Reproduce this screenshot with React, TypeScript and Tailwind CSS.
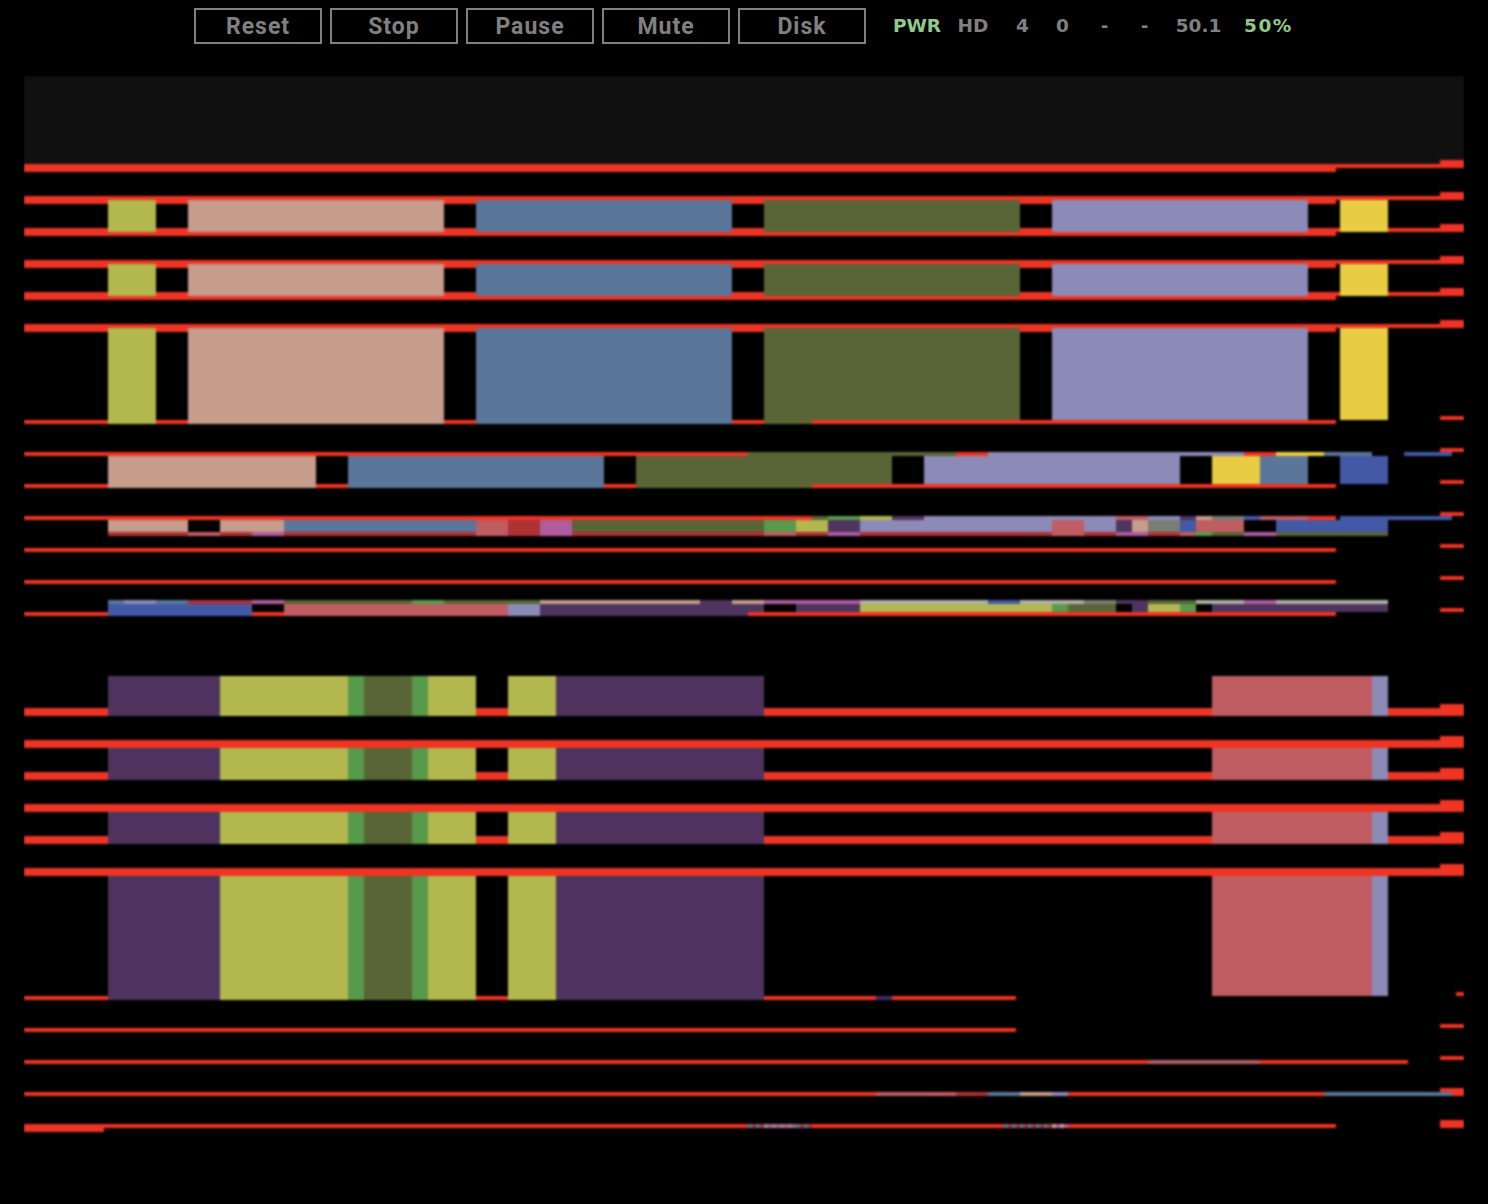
import React from "react";

const RED = "#ef3423";
const YG = "#b3b84e";
const TAN = "#c69c8c";
const BLUE = "#5a7699";
const OLIVE = "#596437";
const LAV = "#8c8bb8";
const YEL = "#e8cd42";
const PUR = "#4e345e";
const GRN = "#589a4c";
const ROSE = "#c05d62";
const DRED = "#ae3134";
const MAG = "#b05c9e";
const ROY = "#4359a6";
const GRY = "#7a7d72";
const LGR = "#b0b0a8";

type Seg = [number, number, string];
type Row = { y: number; b: number; segs: Seg[] };

const buttons = ["Reset", "Stop", "Pause", "Mute", "Disk"];

// bars of the raster, in page coordinates, painted in order
const rows: Row[] = [];
const add = (y: number, b: number, segs: Seg[]) => rows.push({ y, b, segs });

// top group of red bars
[164, 196, 228, 260, 292, 324].forEach((y) => {
  add(y, y + 8, [[24, 1336, RED]]);
  add(y, y + 4, [[1336, 1440, RED]]);
  add(y - 4, y + 4, [[1440, 1464, RED]]);
});

const sixCols = (y: number, b: number) =>
  add(y, b, [
    [108, 156, YG],
    [188, 444, TAN],
    [476, 732, BLUE],
    [764, 1020, OLIVE],
    [1052, 1308, LAV],
    [1340, 1388, YEL],
  ]);

sixCols(200, 232);
sixCols(264, 296);
add(420, 424, [[24, 1336, RED]]);
add(416, 420, [[1440, 1464, RED]]);
sixCols(328, 420);
add(420, 424, [
  [108, 156, YG],
  [188, 444, TAN],
  [476, 732, BLUE],
  [764, 812, OLIVE],
]);

// narrow blocks
add(452, 456, [
  [24, 748, RED],
  [748, 956, OLIVE],
  [956, 988, RED],
  [988, 1244, LAV],
  [1244, 1276, RED],
  [1276, 1324, YEL],
  [1324, 1372, BLUE],
  [1404, 1452, ROY],
]);
add(448, 452, [[1440, 1464, RED]]);
add(484, 488, [[24, 1336, RED]]);
add(480, 484, [[1440, 1464, RED]]);
add(456, 484, [
  [108, 316, TAN],
  [348, 604, BLUE],
  [636, 892, OLIVE],
  [924, 1180, LAV],
  [1212, 1260, YEL],
  [1260, 1308, BLUE],
  [1340, 1388, ROY],
]);
add(484, 488, [
  [108, 316, TAN],
  [348, 604, BLUE],
  [636, 812, OLIVE],
]);

// squeezed rows
add(516, 520, [
  [24, 812, RED],
  [812, 828, OLIVE],
  [828, 860, GRN],
  [860, 892, YG],
  [892, 924, PUR],
  [924, 1116, LAV],
  [1116, 1148, ROSE],
  [1148, 1180, LAV],
  [1180, 1196, PUR],
  [1196, 1212, TAN],
  [1212, 1244, GRY],
  [1244, 1260, ROY],
  [1260, 1308, ROSE],
  [1308, 1336, RED],
  [1340, 1452, ROY],
]);
add(512, 516, [[1440, 1464, RED]]);
add(520, 532, [
  [108, 188, TAN],
  [220, 284, TAN],
  [284, 476, BLUE],
  [476, 508, ROSE],
  [508, 540, DRED],
  [540, 572, MAG],
  [572, 764, OLIVE],
  [764, 796, GRN],
  [796, 828, YG],
  [828, 860, PUR],
  [860, 1052, LAV],
  [1052, 1084, ROSE],
  [1084, 1116, LAV],
  [1116, 1132, PUR],
  [1132, 1148, TAN],
  [1148, 1180, GRY],
  [1180, 1196, ROY],
  [1196, 1244, ROSE],
  [1276, 1388, ROY],
]);
add(532, 536, [
  [108, 188, DRED],
  [188, 220, ROSE],
  [220, 252, DRED],
  [252, 284, MAG],
  [284, 476, DRED],
  [476, 508, ROSE],
  [508, 540, DRED],
  [540, 572, MAG],
  [572, 764, DRED],
  [764, 796, ROSE],
  [796, 828, DRED],
  [828, 860, MAG],
  [860, 1052, DRED],
  [1052, 1084, ROSE],
  [1084, 1116, DRED],
  [1116, 1148, MAG],
  [1148, 1180, DRED],
  [1180, 1196, ROSE],
  [1196, 1212, GRN],
  [1212, 1244, OLIVE],
  [1244, 1276, MAG],
  [1276, 1388, OLIVE],
]);

add(548, 552, [[24, 1336, RED]]);
add(544, 548, [[1440, 1464, RED]]);
add(580, 584, [[24, 1336, RED]]);
add(576, 580, [[1440, 1464, RED]]);

add(612, 616, [
  [24, 108, RED],
  [252, 284, RED],
  [748, 1336, RED],
]);
add(608, 612, [[1440, 1464, RED]]);
add(600, 604, [
  [108, 124, BLUE],
  [124, 156, LAV],
  [156, 188, BLUE],
  [188, 252, DRED],
  [252, 284, MAG],
  [284, 412, OLIVE],
  [412, 444, GRN],
  [444, 540, OLIVE],
  [540, 700, TAN],
  [700, 732, PUR],
  [732, 764, TAN],
  [764, 860, MAG],
  [860, 988, LGR],
  [988, 1020, ROY],
  [1020, 1084, LGR],
  [1084, 1116, GRY],
  [1116, 1148, PUR],
  [1148, 1196, OLIVE],
  [1196, 1244, LGR],
  [1244, 1276, MAG],
  [1276, 1388, LGR],
]);
add(604, 612, [
  [108, 252, ROY],
  [284, 508, ROSE],
  [508, 540, LAV],
  [540, 764, PUR],
  [796, 860, PUR],
  [860, 1052, YG],
  [1052, 1068, GRN],
  [1068, 1116, OLIVE],
  [1132, 1148, PUR],
  [1148, 1180, YG],
  [1180, 1196, GRN],
  [1212, 1388, PUR],
]);
add(612, 616, [
  [108, 252, ROY],
  [284, 508, ROSE],
  [508, 540, LAV],
  [540, 748, PUR],
]);

// lower group
[708, 740, 772, 804, 836, 868].forEach((y) => {
  add(y, y + 8, [[24, 1440, RED]]);
  add(y - 4, y + 8, [[1440, 1464, RED]]);
});

const lowerCols = (y: number, b: number, rb: number) => {
  add(y, b, [
    [108, 220, PUR],
    [220, 348, YG],
    [348, 364, GRN],
    [364, 412, OLIVE],
    [412, 428, GRN],
    [428, 476, YG],
    [508, 556, YG],
    [556, 764, PUR],
  ]);
  add(y, rb, [
    [1212, 1372, ROSE],
    [1372, 1388, LAV],
  ]);
};
lowerCols(676, 716, 716);
lowerCols(748, 780, 780);
lowerCols(812, 844, 844);
lowerCols(876, 1000, 996);

// thin lines at the bottom
add(996, 1000, [
  [24, 108, RED],
  [476, 508, RED],
  [764, 876, RED],
  [876, 892, "#3e2f6a"],
  [892, 1016, RED],
]);
add(992, 996, [[1456, 1464, RED]]);
add(1028, 1032, [[24, 1016, RED]]);
add(1024, 1028, [[1440, 1464, RED]]);
add(1060, 1064, [
  [24, 1148, RED],
  [1148, 1260, "#b06068"],
  [1260, 1408, RED],
]);
add(1056, 1060, [[1440, 1464, RED]]);
add(1088, 1096, [[1440, 1464, RED]]);
add(1092, 1096, [
  [24, 876, RED],
  [876, 956, ROSE],
  [956, 988, DRED],
  [988, 1020, BLUE],
  [1020, 1052, TAN],
  [1052, 1068, LAV],
  [1068, 1324, RED],
  [1324, 1452, BLUE],
]);
add(1120, 1128, [[1440, 1464, RED]]);
add(1124, 1128, [[24, 1336, RED]]);
add(1124, 1132, [[24, 104, RED]]);

const dots = (start: number, colors: string[]) =>
  add(
    1124,
    1128,
    colors.map((c, i): Seg => [start + i * 4, start + (i + 1) * 4, c]),
  );
dots(748, [BLUE, DRED, BLUE, DRED, LAV, ROSE, LAV, ROSE, LAV, ROSE, LAV, ROSE, BLUE, DRED, BLUE, DRED]);
dots(1004, [BLUE, DRED, BLUE, DRED, BLUE, DRED, BLUE, DRED, BLUE, DRED, BLUE, DRED, TAN, MAG, TAN, MAG]);

const Screen = () => (
  <svg width={1440} height={1064} viewBox="24 76 1440 1064" className="block">
    <defs>
      <filter id="soft" x="0" y="0" width="100%" height="100%" colorInterpolationFilters="sRGB">
        <feGaussianBlur stdDeviation="0.8" />
      </filter>
    </defs>
    <g filter="url(#soft)">
      <rect x={24} y={76} width={1440} height={1064} fill="#000000" />
      <rect x={24} y={76} width={1440} height={88} fill="#101010" />
      {rows.map((row, i) =>
        row.segs.map(([x1, x2, c], j) => (
          <rect key={i + "-" + j} x={x1} y={row.y} width={x2 - x1} height={row.b - row.y} fill={c} />
        )),
      )}
    </g>
  </svg>
);

const App = () => {
  return (
    <div className="w-[1488px] h-[1204px] bg-black overflow-hidden">
      {/* Controls */}
      <div className="flex items-center h-[52px] pl-[194px]">
        <div className="flex gap-2">
          {buttons.map((b) => (
            <button
              key={b}
              className="w-[128px] h-[36px] pt-px border-2 border-[#808080] text-[#808080] text-[23px] tracking-[1px] font-bold font-['Roboto',sans-serif] leading-none"
            >
              {b}
            </button>
          ))}
        </div>
        <div className="flex ml-[23px] pb-px text-[18.5px] font-bold text-[#808080] font-['DejaVu_Sans',sans-serif]">
          <span className="w-[56px] text-center text-[#92c98a]">PWR</span>
          <span className="w-[56px] text-center">HD</span>
          <span className="w-[43px] text-center">4</span>
          <span className="w-[37px] text-center">0</span>
          <span className="w-[47px] text-center">-</span>
          <span className="w-[33px] text-center">-</span>
          <span className="w-[75px] text-center">50.1</span>
          <span className="w-[65px] text-center tracking-[1.5px] text-[#92c98a]">50%</span>
        </div>
      </div>

      {/* Emulator output */}
      <div className="pl-6 pt-6">
        <Screen />
      </div>
    </div>
  );
};

export default App;
